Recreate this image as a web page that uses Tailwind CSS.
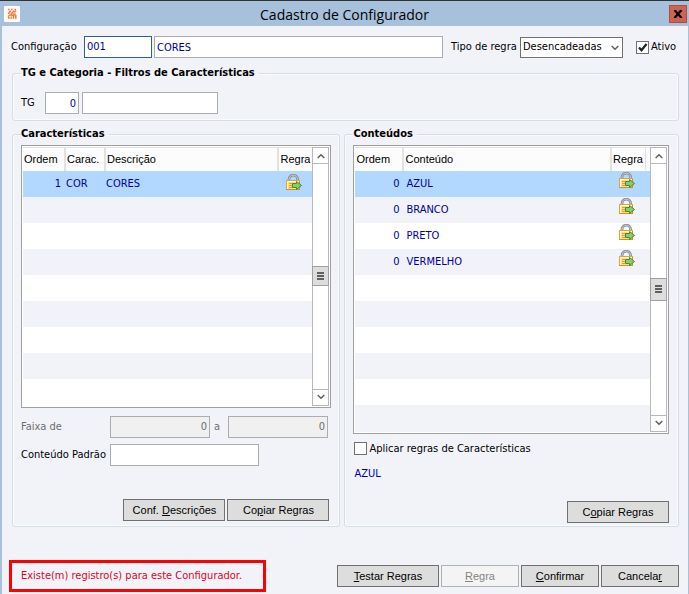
<!DOCTYPE html>
<html lang="pt-BR">
<head>
<meta charset="utf-8">
<meta name="viewport" content="width=device-width, initial-scale=1">
<title>Cadastro de Configurador</title>
<script src="https://cdn.jsdelivr.net/npm/@tailwindcss/browser@4"></script>
</head>
<body class="min-h-screen flex flex-col bg-[#f2f3f9] border-t border-t-[#333333] font-['DejaVu_Sans_Condensed','DejaVu_Sans','Noto_Sans',sans-serif] text-[11px] leading-[14px] text-black">
<svg class="hidden" aria-hidden="true">
  <symbol id="lock" viewBox="0 0 16 16">
    <path d="M3 8V5.500a4.300 4.300 0 0 1 8.600 0V8" fill="none" stroke="#8b8e93" stroke-width="2.800"/>
    <path d="M3 8V5.500a4.300 4.300 0 0 1 8.600 0V8" fill="none" stroke="#c9cbd0" stroke-width="1"/>
    <rect x=".5" y="6.500" width="13" height="9" fill="#fbe08a" stroke="#e0a63c"/>
    <path d="M1 7.500h12M1.500 7v8" stroke="#fff8da"/>
    <path d="M13.500 7v9M0 15.500h14" stroke="#d48f20"/>
    <path d="M3 9.500h3M3 11.500h3M3 13.500h3" stroke="#e0a029"/>
    <path d="M6.500 9.500h4V7.500l5 4-5 4v-2h-4z" fill="#8ccb72" stroke="#3c8f2c"/>
  </symbol>
  <symbol id="up" viewBox="0 0 8 6"><path d="M.700 5 4 1.700 7.300 5" fill="none" stroke="#606060" stroke-width="1.500"/></symbol>
  <symbol id="down" viewBox="0 0 8 6"><path d="M.700 1 4 4.300 7.300 1" fill="none" stroke="#606060" stroke-width="1.500"/></symbol>
</svg>

<header class="relative flex h-[25px] shrink-0 items-center justify-between bg-[#a7c0dc] pl-1 pr-[2px]">
  <svg class="size-4" viewBox="0 0 16 16" aria-hidden="true">
    <rect width="16" height="16" rx="1" fill="#fdf9f6"/>
    <g fill="none" stroke="#ee7a38" stroke-width="1.500">
      <path d="M4 3.500h1.500M7 3.500h1.500M10.500 3.500h1.500"/>
      <path d="M5 5.500h2M8.500 5.500h1.500M4 7.500 6 6.500M7 7.500l2-1M10 6.500l2-2"/>
      <path d="M4 10.500 7 8.500 8.500 10M4.700 12.800V11M7.200 12.800v-2M9.500 12.800V9.500L10 8l1.800 1.500v3.300"/>
    </g>
    <path d="M6 4h1v1H6zM9 4h1v1H9zM11 7h1v1h-1zM8 8h1v1H8z" fill="#f7b58c"/>
  </svg>
  <h1 class="font-['Open_Sans','Noto_Sans',sans-serif] text-[14px] leading-5 pt-[2px]">Cadastro de Configurador</h1>
  <button type="button" aria-label="Fechar" class="flex h-[18px] w-[18px] items-center justify-center border border-[#b74a3a] bg-[#cd6351]">
    <svg class="h-2 w-[10px]" viewBox="0 0 10 8" aria-hidden="true"><path d="M1.500 0 8.500 8M8.500 0 1.500 8" stroke="#000" stroke-width="2.200"/></svg>
  </button>
</header>

<main class="flex-1 border-l-2 border-r border-[#a7c0dc] pt-[10px] pl-[9px] pr-[9px]">
  <form onsubmit="return false">
    <div class="flex items-center">
      <label for="cfg" class="w-[73px] shrink-0">Configuração</label>
      <input id="cfg" value="001" class="h-[22px] w-[68px] shrink-0 border border-[#2c628b] bg-white px-[2px] pb-[2px] text-[#0000a0] outline-none">
      <input aria-label="Nome da configuração" value="CORES" class="ml-[2px] h-[22px] min-w-0 flex-1 border border-[#abadb3] bg-white px-[2px] text-[#0000a0]">
      <label for="tipo" class="ml-2 w-[69px] shrink-0 whitespace-nowrap">Tipo de regra</label>
      <span class="relative shrink-0">
        <select id="tipo" class="block h-[21px] w-[103px] appearance-none border border-[#707070] bg-white pl-[2px] pr-4"><option>Desencadeadas</option></select>
        <svg class="pointer-events-none absolute right-1 top-2 h-[6px] w-2" aria-hidden="true"><use href="#down"/></svg>
      </span>
      <label class="ml-[13px] mr-[3px] flex w-[40px] shrink-0 items-center gap-[2px]">
        <span class="relative block size-[13px] shrink-0">
          <input type="checkbox" checked class="peer block size-[13px] appearance-none border border-[#707070] bg-white">
          <svg class="pointer-events-none absolute left-0 top-0 hidden size-[13px] peer-checked:block" viewBox="0 0 13 13" aria-hidden="true"><path d="M3 6.500 5.500 9.300 10.500 3" fill="none" stroke="#222" stroke-width="2.200"/></svg>
        </span>
        Ativo
      </label>
    </div>

    <fieldset class="ml-px mt-2 rounded-[3px] border border-[#d3dfe5] px-2 pb-[6px] pt-[12px] shadow-[inset_0_0_0_1px_#fafbfd]">
      <legend class="bg-[#f2f3f9] pr-1 font-bold">TG e Categoria - Filtros de Características</legend>
      <div class="flex items-center">
        <label for="tg" class="w-6">TG</label>
        <input id="tg" value="0" class="h-[22px] w-[34px] border border-[#abadb3] bg-white px-[2px] text-right text-[#0000a0]">
        <input aria-label="Descrição do TG" class="ml-[3px] h-[22px] w-[136px] border border-[#abadb3] bg-white px-[2px]">
      </div>
    </fieldset>

    <div class="ml-px mt-[6px] grid grid-cols-[328fr_334fr] gap-1">
      <fieldset class="flex min-w-0 flex-col rounded-[3px] border border-[#d3dfe5] px-2 pb-[5px] pt-[4px] shadow-[inset_0_0_0_1px_#fafbfd]">
        <legend class="bg-[#f2f3f9] pr-1 font-bold">Características</legend>
        <div class="flex border border-[#a0a0a0] bg-white p-px">
          <table class="min-w-0 flex-1 table-fixed border-collapse self-start text-left">
            <colgroup><col class="w-[42px]"><col class="w-[40px]"><col><col class="w-[34px]"></colgroup>
            <thead class="font-['Liberation_Sans',Arial,sans-serif] text-[11px]">
              <tr class="h-[23px] bg-[#fcfcfc]">
                <th class="border-r-2 border-t border-[#e2e2e2] p-0 pl-px font-normal">Ordem</th>
                <th class="border-r-2 border-t border-[#e2e2e2] p-0 pl-px font-normal">Carac.</th>
                <th class="border-r-2 border-t border-[#e2e2e2] p-0 pl-px font-normal">Descrição</th>
                <th class="border-t border-[#e2e2e2] p-0 pl-px font-normal">Regra</th>
              </tr>
            </thead>
            <tbody class="text-[#0000a0]">
              <tr class="h-[26px] bg-[#b3d8ff]">
                <td class="p-0 pr-1 text-right">1</td><td class="p-0 pl-px">COR</td><td class="p-0 pl-px">CORES</td>
                <td class="p-0 pl-2 align-top"><svg class="mt-[3px] size-4" role="img" aria-label="Regra"><use href="#lock"/></svg></td>
              </tr>
              <tr class="h-[26px] bg-[#f2f3f9]"><td colspan="4"></td></tr>
              <tr class="h-[26px]"><td colspan="4"></td></tr>
              <tr class="h-[26px] bg-[#f2f3f9]"><td colspan="4"></td></tr>
              <tr class="h-[26px]"><td colspan="4"></td></tr>
              <tr class="h-[26px] bg-[#f2f3f9]"><td colspan="4"></td></tr>
              <tr class="h-[26px]"><td colspan="4"></td></tr>
              <tr class="h-[26px] bg-[#f2f3f9]"><td colspan="4"></td></tr>
              <tr class="h-[27px]"><td colspan="4"></td></tr>
            </tbody>
          </table>
          <div class="flex w-[17px] shrink-0 flex-col border border-[#b8b8b8]">
            <button type="button" aria-label="Rolar para cima" class="flex h-4 items-center justify-center border-b border-[#b8b8b8]"><svg class="h-[6px] w-2"><use href="#up"/></svg></button>
            <div class="flex flex-1 flex-col items-stretch justify-center">
              <div class="-mx-px flex h-5 flex-col items-center justify-center gap-px border border-[#a0a0a0] bg-[#dddddd]">
                <i class="h-[2px] w-[7px] bg-[#606060]"></i><i class="h-[2px] w-[7px] bg-[#606060]"></i><i class="h-[2px] w-[7px] bg-[#606060]"></i>
              </div>
            </div>
            <button type="button" aria-label="Rolar para baixo" class="flex h-4 items-center justify-center border-t border-[#b8b8b8]"><svg class="h-[6px] w-2"><use href="#down"/></svg></button>
          </div>
        </div>
        <div class="mt-2 flex items-center text-[#6d6d6d]">
          <label for="de" class="w-[89px]">Faixa de</label>
          <input id="de" value="0" disabled class="h-[22px] w-[100px] min-w-0 border border-[#abadb3] bg-[#f0f0f0] px-[2px] text-right">
          <label for="ate" class="w-[18px] pl-1">a</label>
          <input id="ate" value="0" disabled class="h-[22px] w-[100px] min-w-0 border border-[#abadb3] bg-[#f0f0f0] px-[2px] text-right">
        </div>
        <div class="mt-[6px] flex items-center">
          <label for="padrao" class="w-[89px] whitespace-nowrap">Conteúdo Padrão</label>
          <input id="padrao" class="h-[22px] w-[149px] border border-[#abadb3] bg-white px-[2px]">
        </div>
        <div class="mr-[2px] mt-[33px] flex justify-end gap-[2px] font-['Liberation_Sans',Arial,sans-serif]">
          <button type="button" class="h-[22px] w-[102px] border border-[#707070] bg-[#dddddd]">Conf. <u>D</u>escrições</button>
          <button type="button" class="h-[22px] w-[102px] border border-[#707070] bg-[#dddddd]">Co<u>p</u>iar Regras</button>
        </div>
      </fieldset>

      <fieldset class="flex min-w-0 flex-col rounded-[3px] border border-[#d3dfe5] pl-2 pr-[9px] pb-[3px] pt-[4px] shadow-[inset_0_0_0_1px_#fafbfd]">
        <legend class="bg-[#f2f3f9] pr-1 font-bold">Conteúdos</legend>
        <div class="flex border border-[#a0a0a0] bg-white p-px">
          <table class="min-w-0 flex-1 table-fixed border-collapse self-start text-left">
            <colgroup><col class="w-[48px]"><col><col class="w-[39px]"></colgroup>
            <thead class="font-['Liberation_Sans',Arial,sans-serif] text-[11px]">
              <tr class="h-[23px] bg-[#fcfcfc]">
                <th class="border-r-2 border-t border-[#e2e2e2] p-0 pl-px font-normal">Ordem</th>
                <th class="border-r-2 border-t border-[#e2e2e2] p-0 pl-px font-normal">Conteúdo</th>
                <th class="border-t border-[#e2e2e2] p-0 font-normal"><span class="mr-1 block border-r border-[#e2e2e2] pl-px leading-[22px]">Regra</span></th>
              </tr>
            </thead>
            <tbody class="text-[#0000a0]">
              <tr class="h-[26px] bg-[#b3d8ff]"><td class="p-0 pr-1 text-right">0</td><td class="p-0 pl-[3px]">AZUL</td><td class="p-0 pl-2 align-top"><svg class="mt-px size-4" role="img" aria-label="Regra"><use href="#lock"/></svg></td></tr>
              <tr class="h-[26px] bg-[#f2f3f9]"><td class="p-0 pr-1 text-right">0</td><td class="p-0 pl-[3px]">BRANCO</td><td class="p-0 pl-2 align-top"><svg class="mt-px size-4" role="img" aria-label="Regra"><use href="#lock"/></svg></td></tr>
              <tr class="h-[26px]"><td class="p-0 pr-1 text-right">0</td><td class="p-0 pl-[3px]">PRETO</td><td class="p-0 pl-2 align-top"><svg class="mt-px size-4" role="img" aria-label="Regra"><use href="#lock"/></svg></td></tr>
              <tr class="h-[26px] bg-[#f2f3f9]"><td class="p-0 pr-1 text-right">0</td><td class="p-0 pl-[3px]">VERMELHO</td><td class="p-0 pl-2 align-top"><svg class="mt-px size-4" role="img" aria-label="Regra"><use href="#lock"/></svg></td></tr>
              <tr class="h-[26px]"><td colspan="3"></td></tr>
              <tr class="h-[26px] bg-[#f2f3f9]"><td colspan="3"></td></tr>
              <tr class="h-[26px]"><td colspan="3"></td></tr>
              <tr class="h-[26px] bg-[#f2f3f9]"><td colspan="3"></td></tr>
              <tr class="h-[26px]"><td colspan="3"></td></tr>
              <tr class="h-[27px] bg-[#f2f3f9]"><td colspan="3"></td></tr>
            </tbody>
          </table>
          <div class="flex w-[17px] shrink-0 flex-col border border-[#b8b8b8]">
            <button type="button" aria-label="Rolar para cima" class="flex h-4 items-center justify-center border-b border-[#b8b8b8]"><svg class="h-[6px] w-2"><use href="#up"/></svg></button>
            <div class="flex flex-1 flex-col items-stretch justify-center">
              <div class="-mx-px flex h-[23px] flex-col items-center justify-center gap-px border border-[#a0a0a0] bg-[#dddddd]">
                <i class="h-[2px] w-[7px] bg-[#606060]"></i><i class="h-[2px] w-[7px] bg-[#606060]"></i><i class="h-[2px] w-[7px] bg-[#606060]"></i>
              </div>
            </div>
            <button type="button" aria-label="Rolar para baixo" class="flex h-4 items-center justify-center border-t border-[#b8b8b8]"><svg class="h-[6px] w-2"><use href="#down"/></svg></button>
          </div>
        </div>
        <label class="ml-px mt-2 flex items-center gap-[2px]">
          <input type="checkbox" class="size-[13px] appearance-none border border-[#707070] bg-white checked:bg-[#707070]">
          Aplicar regras de Características
        </label>
        <p class="ml-px mt-[11px] text-[#0000a0]">AZUL</p>
        <div class="mt-5 flex justify-end font-['Liberation_Sans',Arial,sans-serif]">
          <button type="button" class="h-[22px] w-[102px] border border-[#707070] bg-[#dddddd]">C<u>o</u>piar Regras</button>
        </div>
      </fieldset>
    </div>

    <footer class="-ml-[2px] mt-[33px] flex items-start justify-between">
      <p class="h-8 w-[257px] border-[3px] border-[#ff0000] pl-[9px] pt-[6px] text-[#e8001c]">Existe(m) registro(s) para este Configurador.</p>
      <div class="mt-[5px] flex gap-[2px] font-['Liberation_Sans',Arial,sans-serif]">
        <button type="button" class="h-[22px] w-[102px] border border-[#707070] bg-[#dddddd]"><u>T</u>estar Regras</button>
        <button type="button" disabled class="h-[22px] w-[78px] border border-[#adb2b5] bg-[#f4f4f4] text-[#838383]"><u>R</u>egra</button>
        <button type="button" class="h-[22px] w-[78px] border border-[#707070] bg-[#dddddd]"><u>C</u>onfirmar</button>
        <button type="button" class="h-[22px] w-[78px] border border-[#707070] bg-[#dddddd]">Cancela<u>r</u></button>
      </div>
    </footer>
  </form>
</main>
</body>
</html>
